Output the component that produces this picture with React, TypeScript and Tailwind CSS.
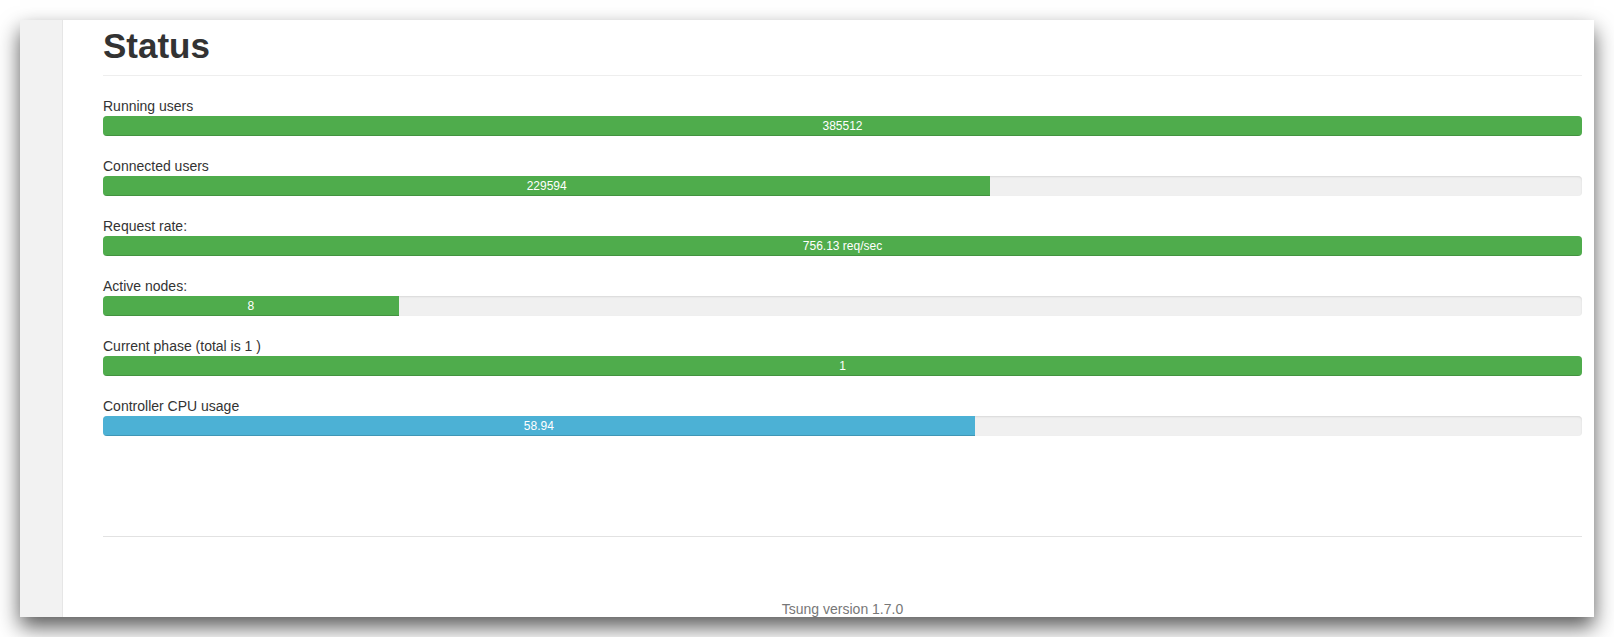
import React from "react"

interface Stat {
    label: string
    value: string
    percent: number
    color: string
}

const stats: Stat[] = [
    { label: "Running users", value: "385512", percent: 100, color: "bg-[#4fac4c]" },
    { label: "Connected users", value: "229594", percent: 60, color: "bg-[#4fac4c]" },
    { label: "Request rate:", value: "756.13 req/sec", percent: 100, color: "bg-[#4fac4c]" },
    { label: "Active nodes:", value: "8", percent: 20, color: "bg-[#4fac4c]" },
    { label: "Current phase (total is 1 )", value: "1", percent: 100, color: "bg-[#4fac4c]" },
    { label: "Controller CPU usage", value: "58.94", percent: 58.94, color: "bg-[#4cb1d5]" },
]

function ProgressRow({ stat }: { stat: Stat }) {
    return (
        <div className="mb-5">
            <div className="text-[14px] leading-5 text-[#333]">{stat.label}</div>
            <div className="h-5 w-full rounded bg-[#f0f0f0] overflow-hidden shadow-[inset_0_1px_2px_rgba(0,0,0,0.1)]">
                <div
                    className={`h-full ${stat.color} text-white text-[12px] leading-5 text-center shadow-[inset_0_-1px_0_rgba(0,0,0,0.15)]`}
                    style={{ width: `${stat.percent}%` }}
                >
                    {stat.value}
                </div>
            </div>
        </div>
    )
}

export default function App() {
    return (
        <div className="w-[1614px] h-[637px] bg-white p-5 font-['Liberation_Sans',Arial,sans-serif]">
            <div className="flex w-full h-full bg-white overflow-hidden shadow-[0_10px_20px_rgba(0,0,0,0.65)]">
                <aside className="w-[43px] shrink-0 bg-[#f2f2f2] border-r border-[#e6e6e6]" />

                <main className="flex-1 pl-10 pr-3 flex flex-col">
                    <div className="mt-[7px] pb-[9px] border-b border-[#eee] mb-5">
                        <h1 className="text-[35px] leading-[1.1] font-bold text-[#333]">Status</h1>
                    </div>

                    <section>
                        {stats.map((s) => (
                            <ProgressRow stat={s} key={s.label} />
                        ))}
                    </section>

                    <hr className="mt-[80px] border-t border-[#e2e2e2]" />

                    <footer className="mt-auto text-center text-[14px] leading-4 text-[#777]">
                        Tsung version 1.7.0
                    </footer>
                </main>
            </div>
        </div>
    )
}
